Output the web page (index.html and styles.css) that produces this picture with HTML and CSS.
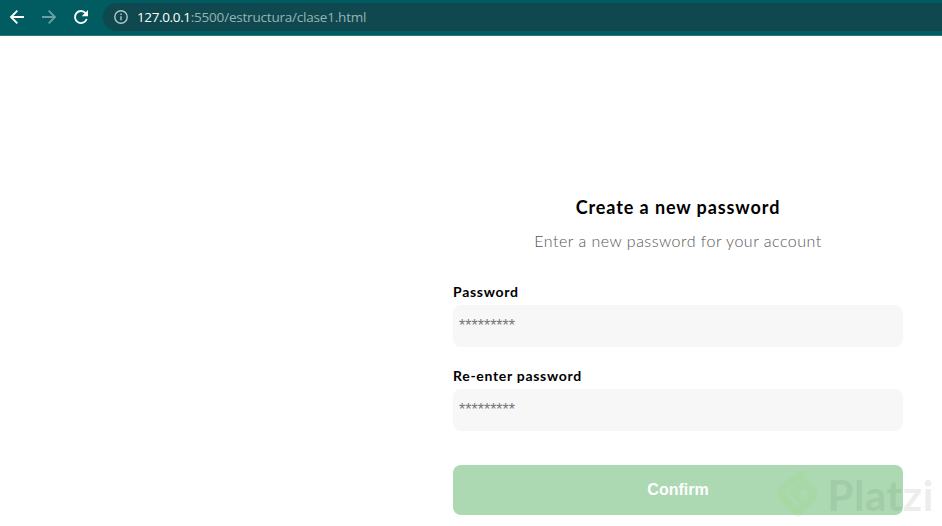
FILE: index.html
```html
<!DOCTYPE html>
<html lang="en">
<head>
<meta charset="utf-8">
<title>Create a new password</title>
<link rel="stylesheet" href="styles.css">
</head>
<body>
<header class="toolbar">
  <svg class="nav-icon" viewBox="0 0 24 24"><path d="M22.5 12H3M12.5 2.5L3 12L12.5 21.5"/></svg>
  <svg class="nav-icon muted" viewBox="0 0 24 24"><path d="M1.500 12H21M11.500 2.500L21 12L11.500 21.500"/></svg>
  <svg class="nav-icon" viewBox="0 0 24 24"><path d="M19 6.400A9 9 0 1 0 20.500 15"/><path class="tip" d="M22.500 1.500v9.500h-9.500z"/></svg>
  <div class="address">
    <svg class="info" viewBox="0 0 14 14"><circle cx="7" cy="7" r="6.2"/><path d="M7 6.2v4M7 3.4v1.5"/></svg>
    <span class="url"><span class="host">127.0.0.1</span><span class="path">:5500/estructura/clase1.html</span></span>
  </div>
</header>
<main class="page">
  <form class="form">
    <h1 class="title">Create a new password</h1>
    <p class="subtitle">Enter a new password for your account</p>
    <label class="label first" for="password">Password</label>
    <input class="input" id="password" type="text" placeholder="*********">
    <label class="label second" for="again">Re-enter password</label>
    <input class="input" id="again" type="text" placeholder="*********">
    <button class="button" type="button">Confirm</button>
  </form>
</main>
<div class="watermark">
  <svg class="mark" viewBox="0 0 44 54"><path d="M24 7L8 20Q3 25 8 30L22 45L35 31Q39 26 35 21L28 14L17 25L27 35"/></svg>
  <span class="brand">Platzi</span>
</div>
</body>
</html>
```
FILE: styles.css
```css
* { box-sizing: border-box; }
body {
  margin: 0;
  height: 526px;
  overflow: hidden;
  background: #fff;
  font-family: Lato, sans-serif;
}
.toolbar {
  display: flex;
  align-items: center;
  gap: 16px;
  height: 36px;
  padding: 0 0 2px 9px;
  background: #005c60;
  border-bottom: 1px solid #2b777a;
}
.nav-icon {
  flex: none;
  width: 16px;
  height: 16px;
  fill: none;
  stroke: #fff;
  stroke-width: 2.8;
}
.muted { stroke: #68a0a5; }
.tip { fill: #fff; stroke: none; }
.address {
  flex: 1;
  display: flex;
  align-items: center;
  gap: 9px;
  height: 28px;
  margin-left: -2px;
  padding-left: 11px;
  border-radius: 14px 0 0 14px;
  background: #0f484e;
}
.info {
  width: 14px;
  height: 14px;
  fill: none;
  stroke: #b2c8ca;
  stroke-width: 1.4;
}
.url {
  font: 13.5px/18px "Open Sans", sans-serif;
  white-space: nowrap;
}
.host { color: #fff; letter-spacing: -.36px; }
.path { color: #96b4b7; letter-spacing: -.2px; }
.page { padding: 160px 39px 0 453px; }
.form { display: flex; flex-direction: column; }
.title {
  margin: 0;
  font-size: 18px;
  line-height: 23px;
  font-weight: 700;
  letter-spacing: .9px;
  text-align: center;
}
.subtitle {
  margin: 12px 0 0;
  font-size: 16px;
  line-height: 20px;
  font-weight: 300;
  letter-spacing: .49px;
  text-align: center;
  color: #555;
}
.label {
  font-size: 14px;
  line-height: 18px;
  font-weight: 700;
  letter-spacing: .7px;
}
.first { margin-top: 32px; }
.second { margin-top: 20px; }
.input {
  height: 42px;
  margin-top: 4px;
  padding: 0 6px;
  border: 0;
  border-radius: 8px;
  background: #f7f7f7;
  font: 16px "Liberation Sans", sans-serif;
}
.input::placeholder { color: #757575; }
.button {
  height: 50px;
  margin-top: 34px;
  padding: 0;
  border: 0;
  border-radius: 8px;
  background: #acd9b2;
  color: #fff;
  font: bold 16px "Liberation Sans", sans-serif;
}
.watermark {
  position: absolute;
  right: 8px;
  bottom: 4px;
  display: flex;
  align-items: center;
  gap: 7px;
  height: 54px;
}
.mark {
  width: 44px;
  height: 54px;
  fill: none;
  stroke: #98d85c;
  stroke-width: 8;
  stroke-linejoin: round;
  stroke-linecap: round;
  opacity: .12;
}
.brand {
  color: #555;
  opacity: .1;
  font-size: 42px;
  line-height: 54px;
  font-weight: 700;
  letter-spacing: .6px;
}
```
